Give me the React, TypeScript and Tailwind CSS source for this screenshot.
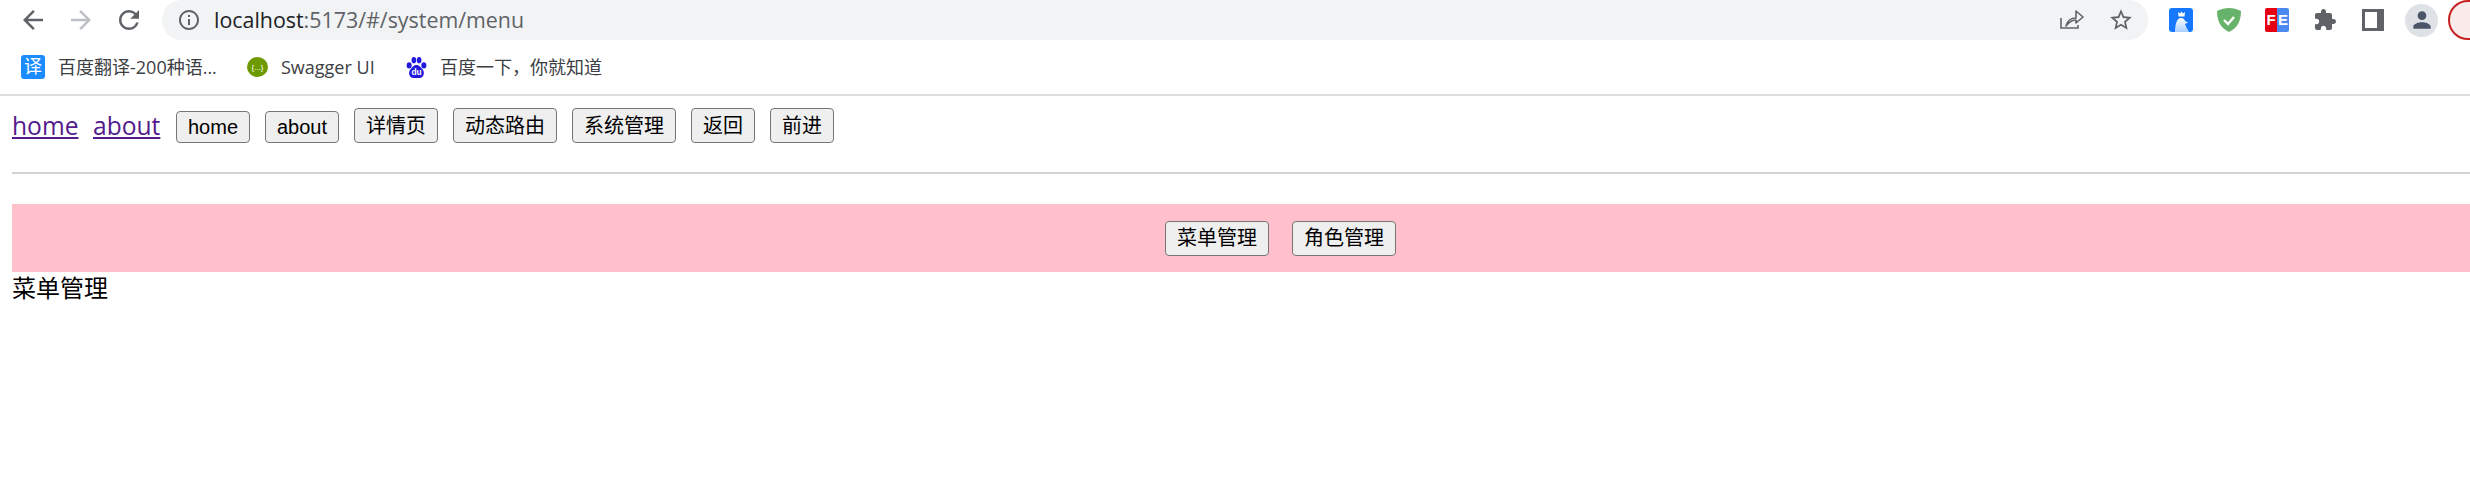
const navButtons = ["详情页", "动态路由", "系统管理", "返回", "前进"];
const cjk = "font-['Liberation_Sans','Noto_Sans_CJK_SC',sans-serif]";
const ui = "font-['Open_Sans','Noto_Sans_CJK_SC',sans-serif]";

function Icon({ d, size, className }: { d: string; size: number; className?: string }) {
  return (
    <svg width={size} height={size} viewBox="0 0 24 24" fill="currentColor" className={`shrink-0 ${className ?? ""}`}>
      <path d={d} />
    </svg>
  );
}

function Bookmark({ icon, label, width }: { icon: React.ReactNode; label: string; width: string }) {
  return (
    <div className={`flex items-center gap-[13px] shrink-0 ${width}`}>
      {icon}
      <span className={`text-[18px] text-[#3c4043] whitespace-nowrap ${ui}`}>{label}</span>
    </div>
  );
}

export default function App() {
  return (
    <div className={`w-[2470px] h-[482px] overflow-hidden bg-white text-black ${cjk}`}>
      {/* browser toolbar */}
      <div className="flex items-center h-10">
        <div className="flex items-center shrink-0 w-[162px] pl-[18px] gap-[18px] text-[#5f6368]">
          <Icon size={30} d="M20 11H7.83l5.59-5.59L12 4l-8 8 8 8 1.41-1.41L7.83 13H20v-2z" />
          <Icon size={30} className="text-[#bdc1c6]" d="M4 11h12.17l-5.59-5.59L12 4l8 8-8 8-1.41-1.41L16.17 13H4v-2z" />
          <Icon size={30} d="M17.65 6.35A7.958 7.958 0 0 0 12 4c-4.42 0-7.99 3.58-7.99 8s3.57 8 7.99 8c3.73 0 6.84-2.55 7.73-6h-2.08A5.99 5.99 0 0 1 12 18c-3.31 0-6-2.69-6-6s2.69-6 6-6c1.66 0 3.14.69 4.22 1.78L13 11h7V4l-2.35 2.35z" />
        </div>
        <div className="flex items-center shrink-0 w-[1986px] h-10 bg-[#f1f3f4] rounded-[20px] pl-[15px] pr-[14px]">
          <Icon size={24} className="text-[#5f6368]" d="M11 7h2v2h-2zm0 4h2v6h-2zm1-9C6.48 2 2 6.48 2 12s4.48 10 10 10 10-4.48 10-10S17.52 2 12 2zm0 18c-4.41 0-8-3.59-8-8s3.59-8 8-8 8 3.59 8 8-3.59 8-8 8z" />
          <span className={`ml-[13px] text-[21.4px] text-[#202124] ${ui}`}>
            localhost<span className="text-[#5f6368]">:5173/#/system/menu</span>
          </span>
          <div className="ml-auto flex items-center gap-[24px] text-[#5f6368]">
            <svg width="24" height="24" viewBox="0 0 24 24" fill="none" stroke="currentColor" strokeWidth="1.6" className="shrink-0">
              <path d="M1 10v10h17v-3" />
              <path d="M6 18c1-5 5-8 10-8V3l7 6-7 6v-3c-4 0-7 2-10 6z" strokeLinejoin="round" />
            </svg>
            <Icon size={26} d="M22 9.24l-7.19-.62L12 2 9.19 8.63 2 9.24l5.46 4.73L5.82 21 12 17.27 18.18 21l-1.63-7.03L22 9.24zM12 15.4l-3.76 2.27 1-4.28-3.32-2.88 4.38-.38L12 6.1l1.71 4.04 4.38.38-3.32 2.88 1 4.28L12 15.4z" />
          </div>
        </div>
        <div className="flex items-center shrink-0 ml-[21px]">
          <svg width="24" height="24" viewBox="0 0 24 24" className="shrink-0">
            <defs>
              <linearGradient id="bird" x1="0" y1="0" x2="0" y2="1">
                <stop offset="0" stopColor="#ffffff" />
                <stop offset="1" stopColor="#a8cffb" />
              </linearGradient>
            </defs>
            <rect width="24" height="24" rx="3" fill="#1677ff" />
            <path d="M9.5 8.5L9 4l2 1.5L12.5 3.5 14 5.5 16 4l-.5 4.5z" fill="#fff" />
            <path d="M6 24c0-8 2-14 6-14 2 0 3.5 1 4 3l3 1.5-3 1.5c1 3 3 6 4 8z" fill="url(#bird)" />
          </svg>
          <svg width="24" height="24" viewBox="0 0 24 24" className="ml-[24px] shrink-0">
            <path d="M12 0C8 0 4 1 0 3c0 9 3 17 12 21 9-4 12-12 12-21-4-2-8-3-12-3z" fill="#68b36b" />
            <path d="M7 12l4 4 6-7" fill="none" stroke="#fff" strokeWidth="2.4" />
          </svg>
          <div className="flex ml-[24px] w-6 h-6 rounded-[2px] overflow-hidden text-white text-[15px] font-bold leading-6">
            <span className="w-3 bg-[#e60012] text-center">F</span>
            <span className="w-3 bg-[#4a8af0] text-center">E</span>
          </div>
          <Icon size={24} className="ml-[24px] text-[#5f6368]" d="M20.5 11H19V7c0-1.1-.9-2-2-2h-4V3.5C13 2.12 11.88 1 10.5 1S8 2.12 8 3.5V5H4c-1.1 0-1.99.9-1.99 2v3.8H3.5c1.49 0 2.7 1.21 2.7 2.7s-1.21 2.7-2.7 2.7H2V20c0 1.1.9 2 2 2h3.8v-1.5c0-1.49 1.21-2.7 2.7-2.7 1.49 0 2.7 1.21 2.7 2.7V22H17c1.1 0 2-.9 2-2v-4h1.5c1.38 0 2.5-1.12 2.5-2.5S21.88 11 20.5 11z" />
          <div className="ml-[25px] shrink-0 w-[22px] h-[22px] border-[3px] border-r-[7px] border-[#5f6368]" />
          <div className="flex items-center justify-center shrink-0 ml-[21px] w-[33px] h-[33px] rounded-full bg-[#dee1e6]">
            <Icon size={26} className="text-[#4a5568]" d="M12 12c2.21 0 4-1.79 4-4s-1.79-4-4-4-4 1.79-4 4 1.79 4 4 4zm0 2c-2.67 0-8 1.34-8 4v2h16v-2c0-2.66-5.33-4-8-4z" />
          </div>
          <div className="ml-[10px] w-10 h-10 shrink-0 rounded-full border-2 border-[#c5221f] bg-[#f9ecea]" />
        </div>
      </div>

      {/* bookmarks bar */}
      <div className="flex items-center h-[56px] pl-[21px] border-b-2 border-[#dddddd]">
        <Bookmark
          width="w-[226px]"
          label="百度翻译-200种语..."
          icon={<div className="w-6 h-6 shrink-0 rounded-[3px] bg-[#1a8cff] text-white text-[18px] leading-6 text-center">译</div>}
        />
        <Bookmark
          width="w-[159px]"
          label="Swagger UI"
          icon={
            <svg width="21" height="20" viewBox="0 0 21 20" className="shrink-0">
              <ellipse cx="10.5" cy="10" rx="10.5" ry="10" fill="#6d9a00" />
              <text x="10.5" y="13" fontSize="8" fill="#fff" textAnchor="middle">{"{...}"}</text>
            </svg>
          }
        />
        <Bookmark
          width="w-[200px]"
          label="百度一下，你就知道"
          icon={
            <svg width="21" height="21" viewBox="0 0 20 20" fill="#2319dc" className="shrink-0">
              <ellipse cx="3" cy="8" rx="2.4" ry="2.9" />
              <ellipse cx="7.5" cy="3" rx="2.2" ry="3" />
              <ellipse cx="12.5" cy="3" rx="2.2" ry="3" />
              <ellipse cx="17" cy="8" rx="2.4" ry="2.9" />
              <path d="M10 7.5c-3 0-4 2.5-6 4.5-2 3-1 8 3 8h6c4 0 5-5 3-8-2-2-3-4.5-6-4.5z" />
              <text x="10" y="17.5" fontSize="8" fontWeight="700" fill="#fff" textAnchor="middle">du</text>
            </svg>
          }
        />
      </div>

      {/* page */}
      <div className="pl-3 pt-3">
        <div className="flex items-end h-[35px] text-[24px] leading-[35px]">
          <a href="#" className={`w-[66px] text-[24.6px] text-[#551a8b] underline ${ui}`}>home</a>
          <a href="#" className={`ml-[15px] w-[68px] text-[24.6px] text-[#551a8b] underline ${ui}`}>about</a>
          <button className="ml-[15px] w-[74px] h-8 bg-[#efefef] border border-[#767676] rounded-[4px] text-[20px] leading-none">home</button>
          <button className="ml-[15px] w-[74px] h-8 bg-[#efefef] border border-[#767676] rounded-[4px] text-[20px] leading-none">about</button>
          {navButtons.map((label) => (
            <button
              key={label}
              className="ml-[15px] px-[11px] h-[35px] bg-[#efefef] border border-[#767676] rounded-[4px] text-[20px] leading-none"
            >
              {label}
            </button>
          ))}
        </div>
        <div className="mt-[29px] h-[2px] bg-[#d4d4d4]" />
        <div className="mt-[30px] w-[2537px] h-[68px] flex items-center justify-center gap-[23px] bg-[#ffc0cb]">
          <button className="w-[104px] h-[35px] bg-[#efefef] border border-[#767676] rounded-[4px] text-[20px] leading-none">菜单管理</button>
          <button className="w-[104px] h-[35px] bg-[#efefef] border border-[#767676] rounded-[4px] text-[20px] leading-none">角色管理</button>
        </div>
        <div className="text-[24px] leading-[34px]">菜单管理</div>
      </div>
    </div>
  );
}
